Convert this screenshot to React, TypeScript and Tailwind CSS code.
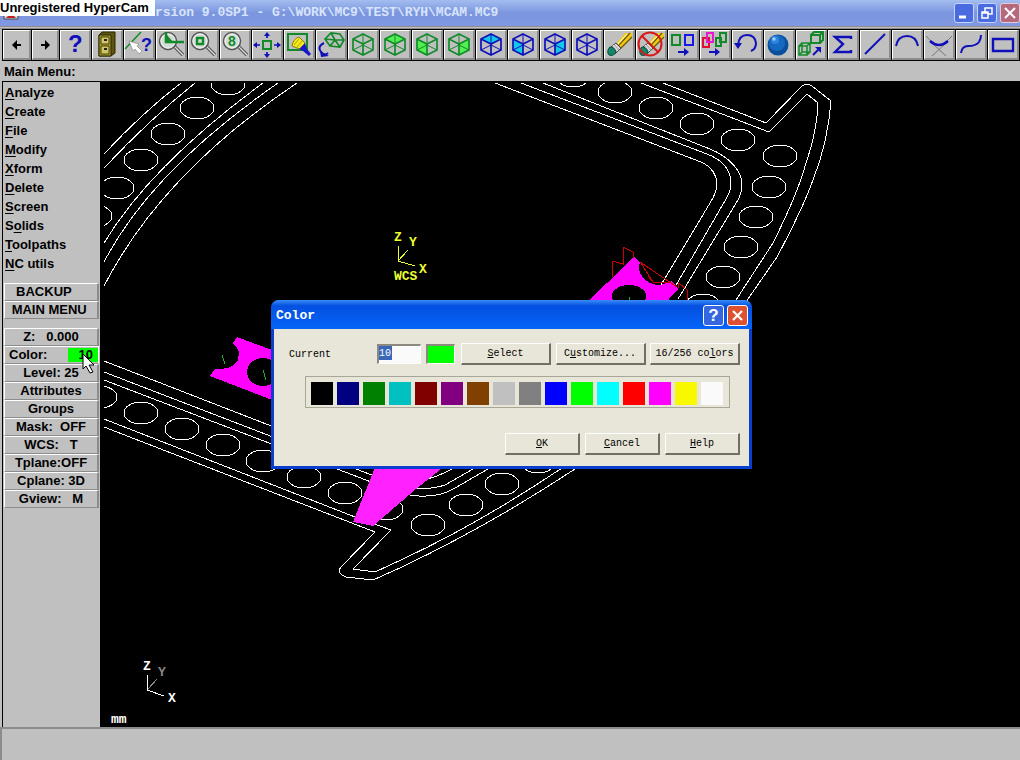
import type { ReactNode } from "react";

const GREEN = "#128a2a";
const BLUE = "#1010b8";

const Cube = ({ color, face, fill }: { color: string; face?: "top" | "left" | "right"; fill?: string }) => (
  <>
    {face === "top" && <path d="M14 3 24 8 14 13 4 8Z" fill={fill} />}
    {face === "left" && <path d="M4 8 14 13V24L4 19Z" fill={fill} />}
    {face === "right" && <path d="M24 8 14 13V24L24 19Z" fill={fill} />}
    <path d="M14 3V14L4 19M14 14 24 19" stroke={color} />
    <path d="M14 3 24 8V19L14 24 4 19V8ZM4 8 14 13 24 8M14 13V24" stroke={color} strokeWidth="1.7" />
  </>
);

const Magnifier = ({ children }: { children: ReactNode }) => (
  <>
    <path d="M17 15 26 24" stroke="#555" strokeWidth="3.5" />
    <path d="M17 15 26 24" stroke="#ddd" strokeWidth="1.2" />
    <circle cx="11" cy="10" r="8.5" fill="#d2ddd6" stroke="#555" strokeWidth="1.5" />
    <circle cx="11" cy="10" r="7" stroke="#f2f2f2" />
    {children}
  </>
);

const Pencil = () => (
  <>
    <path d="M11 13 20 2H27V7L15 18Z" fill="#f0c81c" />
    <path d="M13 15 25 2M15 18 27 6" stroke="#6b5300" strokeWidth="1.2" />
    <path d="M12 14 22 3" stroke="#fff08a" strokeWidth="1.2" />
    <path d="M6 16 11 12 16 17 11 22Z" fill="#b8b8b8" stroke="#444" />
    <path d="M8 14 13 20M10 13 15 18" stroke="#eee" />
    <path d="M3 19Q4 15 7 16 11 18 11 22 7 26 4 24 2 22 3 19Z" fill="#15856a" stroke="#0c4f40" />
  </>
);

const tools: { name: string; icon: ReactNode }[] = [
  {
    name: "Help",
    icon: (
      <text x="7" y="21" className="font-['Liberation_Sans'] text-[24px] font-bold" fill={BLUE}>
        ?
      </text>
    ),
  },
  {
    name: "File",
    icon: (
      <>
        <path d="M6 4 9 1H22V22L18 25H6Z" fill="#5c5410" stroke="#2a2600" />
        <path d="M6 4H18V25H6Z" fill="#a49a38" stroke="#2a2600" />
        <path d="M8 6H16V13H8ZM8 15H16V23H8Z" fill="#cfc66a" stroke="#4a4300" />
        <path d="M11 9H14M11 18H14" stroke="#222" strokeWidth="2" />
      </>
    ),
  },
  {
    name: "Analyze",
    icon: (
      <>
        <path d="M0 18 16 1" stroke={GREEN} strokeWidth="1.5" />
        <path d="M4 10 14 13 12 15 17 20 14 23 10 18 8 20Z" fill="#fff" stroke="#777" strokeWidth=".6" />
        <text x="16" y="20" className="font-['Liberation_Sans'] text-[18px] font-bold" fill={BLUE}>
          ?
        </text>
      </>
    ),
  },
  {
    name: "Zoom",
    icon: (
      <Magnifier>
        <path d="M9 1V11H27" stroke={GREEN} strokeWidth="2.5" />
        <path d="M10 11V4L16 11Z" fill={GREEN} />
      </Magnifier>
    ),
  },
  {
    name: "Zoom window",
    icon: (
      <Magnifier>
        <path d="M8 7H14V13H8Z" stroke={GREEN} strokeWidth="2.4" />
      </Magnifier>
    ),
  },
  {
    name: "Unzoom .8",
    icon: (
      <Magnifier>
        <text x="7" y="15" className="font-['Liberation_Sans'] text-[14px] font-bold" fill={GREEN}>
          8
        </text>
      </Magnifier>
    ),
  },
  {
    name: "Fit",
    icon: (
      <>
        <path d="M10 10H18V18H10Z" stroke={GREEN} strokeWidth="2" />
        <path d="M14 7V3M14 21V25M7 14H2M21 14H26" stroke={BLUE} strokeWidth="1.7" />
        <path d="M11 5 14 1 17 5ZM11 23 14 27 17 23ZM4 11 0 14 4 17ZM24 11 28 14 24 17Z" fill={BLUE} />
      </>
    ),
  },
  {
    name: "Repaint",
    icon: (
      <>
        <path d="M3 3H22V19H3Z" stroke={GREEN} strokeWidth="2" />
        <path d="M7 15Q8 8 14 6L20 12 17 19Z" fill="#f4ea20" stroke="#8a7d00" />
        <path d="M9 14 14 8M12 16 17 10" stroke="#b3a300" />
        <path d="M14 18 20 12 22 18 26 23 24 25 18 20Z" fill="#1818c8" />
      </>
    ),
  },
  {
    name: "Gview dynamic",
    icon: (
      <>
        <path
          d="M8 8 14 2 23 3 27 9 23 16 13 15ZM8 8 18 9 27 9M18 9 13 15M18 9 23 16M14 2 18 9"
          stroke={GREEN}
          strokeWidth="1.7"
        />
        <path d="M7 12Q-1 16 5 22 8 25 11 22" stroke={BLUE} strokeWidth="2" />
        <path d="M3 20 12 25 4 26Z" fill={BLUE} />
      </>
    ),
  },
  { name: "Gview isometric", icon: <Cube color={GREEN} /> },
  { name: "Gview top", icon: <Cube color={GREEN} face="top" fill="#50f050" /> },
  { name: "Gview front", icon: <Cube color={GREEN} face="left" fill="#50f050" /> },
  { name: "Gview side", icon: <Cube color={GREEN} face="right" fill="#50f050" /> },
  { name: "Cplane top", icon: <Cube color={BLUE} face="top" fill="#10c8e8" /> },
  { name: "Cplane front", icon: <Cube color={BLUE} face="left" fill="#10c8e8" /> },
  { name: "Cplane side", icon: <Cube color={BLUE} face="right" fill="#10c8e8" /> },
  { name: "Cplane 3D", icon: <Cube color={BLUE} /> },
  { name: "Delete", icon: <Pencil /> },
  {
    name: "Undelete",
    icon: (
      <>
        <Pencil />
        <circle cx="13" cy="13" r="11.5" stroke="#d81818" strokeWidth="2" />
        <path d="M5 5 21 21" stroke="#d81818" strokeWidth="2" />
      </>
    ),
  },
  {
    name: "Screen copy",
    icon: (
      <>
        <path d="M3 4H11V14H3Z" stroke={GREEN} strokeWidth="2" />
        <path d="M16 4H24V14H16Z" stroke="#1818e8" strokeWidth="2" />
        <path d="M9 21H17" stroke={BLUE} strokeWidth="2" />
        <path d="M15 17 20 21 15 25Z" fill={BLUE} />
      </>
    ),
  },
  {
    name: "Translate",
    icon: (
      <>
        <path d="M2 7H8V16H2Z" stroke="#e01030" strokeWidth="2" />
        <path d="M6 2H12V11H6Z" stroke="#e818d0" strokeWidth="2" />
        <path d="M15 7H20V15H15ZM19 2H25V11H19Z" stroke={GREEN} strokeWidth="2" />
        <path d="M8 21H16" stroke={BLUE} strokeWidth="2" />
        <path d="M14 17 19 21 14 25Z" fill={BLUE} />
      </>
    ),
  },
  {
    name: "Undo",
    icon: (
      <>
        <path d="M5 14Q6 4 14 4 22 4 23 12 23 18 18 20" stroke={BLUE} strokeWidth="2" />
        <path d="M1 12H9L5 18Z" fill={BLUE} />
      </>
    ),
  },
  {
    name: "Shade",
    icon: (
      <>
        <circle cx="13" cy="14" r="10.5" fill="#0a4f9c" />
        <circle cx="12" cy="12" r="8" fill="#1468c0" />
        <circle cx="10" cy="9" r="4" fill="#2c86dc" />
        <circle cx="9" cy="8" r="1.7" fill="#9fd0ff" />
      </>
    ),
  },
  {
    name: "Scale",
    icon: (
      <>
        <path d="M2 15H10V24H2ZM5 12H13V21H5ZM2 15 5 12M10 15 13 12M10 24 13 21M2 24 5 21" stroke={GREEN} strokeWidth="1.5" />
        <path d="M14 4H23V12H14ZM14 4 17 1H26V9L23 12M23 4 26 1" stroke={GREEN} strokeWidth="2" />
        <path d="M16 24 22 18" stroke={BLUE} strokeWidth="2" />
        <path d="M18 16H24V22Z" fill={BLUE} />
      </>
    ),
  },
  { name: "Sigma", icon: <path d="M22 8V6H6L14 13 6 21H22V19" stroke={BLUE} strokeWidth="2.4" /> },
  { name: "Line", icon: <path d="M4 23 24 3" stroke={BLUE} strokeWidth="2" /> },
  { name: "Arc", icon: <path d="M3 15Q5 5 14 5 23 5 25 15" stroke={BLUE} strokeWidth="2" /> },
  {
    name: "Fillet",
    icon: (
      <>
        <path d="M1 5 7 11M27 5 21 11M7 25 20 13M21 25 8 13" stroke="#777" />
        <path d="M5 10Q14 18 23 10" stroke={BLUE} strokeWidth="2.5" />
      </>
    ),
  },
  { name: "Spline", icon: <path d="M4 22Q5 15 11 15 19 15 22 11 24 8 24 4" stroke={BLUE} strokeWidth="2" /> },
  { name: "Rectangle", icon: <path d="M4 8H24V20H4Z" stroke={BLUE} strokeWidth="2.4" /> },
];

const menu = [
  ["", "A", "nalyze"],
  ["", "C", "reate"],
  ["", "F", "ile"],
  ["", "M", "odify"],
  ["", "X", "form"],
  ["", "D", "elete"],
  ["", "S", "creen"],
  ["S", "o", "lids"],
  ["", "T", "oolpaths"],
  ["", "N", "C utils"],
];

const settings = ["Level: 25", "Attributes", "Groups", "Mask:  OFF", "WCS:   T", "Tplane:OFF", "Cplane: 3D", "Gview:   M"];

const palette = [
  ["Black", "bg-black"],
  ["Navy", "bg-[#000080]"],
  ["Dark green", "bg-[#008000]"],
  ["Teal", "bg-[#00c0c0]"],
  ["Maroon", "bg-[#800000]"],
  ["Purple", "bg-[#800080]"],
  ["Brown", "bg-[#804000]"],
  ["Light gray", "bg-[#c0c0c0]"],
  ["Gray", "bg-[#808080]"],
  ["Blue", "bg-[#0000ff]"],
  ["Green", "bg-[#00ff00]"],
  ["Cyan", "bg-[#00ffff]"],
  ["Red", "bg-[#ff0000]"],
  ["Magenta", "bg-[#ff00ff]"],
  ["Yellow", "bg-[#f8f800]"],
  ["White", "bg-[#fafafa]"],
];

// centres of the bolt holes round the frame
const holes = [
  [228, 84], [197, 108], [168, 134], [141, 160], [117, 188], [95, 216],
  [573, 76], [615, 92], [656, 108], [697, 124], [738, 140], [780, 156], [769, 187],
  [756, 217], [741, 247], [723, 277], [703, 305],
  [100, 397], [141, 413], [182, 429], [223, 445], [263, 461], [304, 477], [345, 493],
  [386, 509], [428, 525], [466, 505], [502, 484], [538, 462],
];

const TitleBar = () => (
  <header className="flex h-[26px] items-center bg-linear-to-b from-[#a4bdf0] via-[#7b96de] to-[#8199e2]">
    <div className="relative h-full w-[155px] shrink-0">
      <svg className="absolute bottom-[6px] left-[3px] h-4 w-4" viewBox="0 0 16 16" aria-hidden="true">
        <path d="M1 1H15V15H1Z" fill="#d8d8d8" stroke="#444" />
        <path d="M3 14 8 9 13 14Z" fill="#c02020" />
      </svg>
      <div className="relative h-4 bg-white text-[13px] leading-4 font-bold whitespace-nowrap">
        Unregistered HyperCam
      </div>
    </div>
    <h1 className="grow font-['Liberation_Mono',monospace] text-[13px] font-bold whitespace-nowrap text-[#d8e4fc]">
      rsion 9.0SP1 - G:\WORK\MC9\TEST\RYH\MCAM.MC9
    </h1>
    <div className="flex gap-[3px]">
      <button aria-label="Minimize" className="h-5 w-5 rounded-[3px] border border-[#c6d4fa] bg-[#4a6ae0]">
        <svg viewBox="0 0 18 18">
          <path d="M4 13H11" stroke="#fff" strokeWidth="3" />
        </svg>
      </button>
      <button aria-label="Restore" className="h-5 w-5 rounded-[3px] border border-[#c6d4fa] bg-[#4a6ae0]">
        <svg viewBox="0 0 18 18" fill="none" stroke="#fff" strokeWidth="1.5">
          <path d="M4 8H10V14H4ZM7 8V4H14V10H10M4 9H10" />
        </svg>
      </button>
      <button aria-label="Close" className="h-5 w-5 rounded-[3px] border border-[#e6cbd6] bg-[#b5697c]">
        <svg viewBox="0 0 18 18">
          <path d="M4 4 14 14M14 4 4 14" stroke="#fff" strokeWidth="2" />
        </svg>
      </button>
    </div>
  </header>
);

const Toolbar = () => (
  <nav className="ml-[2px] flex gap-px overflow-hidden border-y border-l border-black bg-black">
    <button
      aria-label="Previous"
      className="h-[30px] w-7 shrink-0 border-t border-r-2 border-b-2 border-l border-t-white border-r-[#8c8c8c] border-b-[#8c8c8c] border-l-white bg-[#c0c0c0]"
    >
      <svg className="h-[27px] w-[25px]" viewBox="0 0 25 27">
        <path d="M10 14H17" stroke="#000" strokeWidth="2" />
        <path d="M8 14 13 9V19Z" />
      </svg>
    </button>
    <button
      aria-label="Next"
      className="h-[30px] w-[27px] shrink-0 border-t border-r-2 border-b-2 border-l border-t-white border-r-[#8c8c8c] border-b-[#8c8c8c] border-l-white bg-[#c0c0c0]"
    >
      <svg className="h-[27px] w-[24px]" viewBox="0 0 24 27">
        <path d="M8 14H15" stroke="#000" strokeWidth="2" />
        <path d="M17 14 12 9V19Z" />
      </svg>
    </button>
    {tools.map((tool) => (
      <button
        key={tool.name}
        aria-label={tool.name}
        className="h-[30px] w-[31px] shrink-0 border-t border-r-2 border-b-2 border-l border-t-white border-r-[#8c8c8c] border-b-[#8c8c8c] border-l-white bg-[#c0c0c0]"
      >
        <svg className="h-[27px] w-7 overflow-visible" viewBox="0 0 28 27" fill="none">
          {tool.icon}
        </svg>
      </button>
    ))}
  </nav>
);

const SideButton = ({ children }: { children: ReactNode }) => (
  <button className="block h-[18px] w-full border-t border-r-2 border-b border-l border-t-white border-r-[#8c8c8c] border-b-[#8c8c8c] border-l-white text-center text-[13px] leading-4 font-bold whitespace-pre">
    {children}
  </button>
);

const Sidebar = () => (
  <aside className="w-[98px] shrink-0 border-t border-l border-black bg-[#c0c0c0] px-px">
    <ul>
      {menu.map(([before, key, after]) => (
        <li key={key + after} className="h-[19px]">
          <button className="block pl-px text-[13px] leading-[21px] font-bold">
            {before}
            <span className="underline underline-offset-2">{key}</span>
            {after}
          </button>
        </li>
      ))}
    </ul>
    <div className="mt-[11px]">
      <SideButton>{"BACKUP    "}</SideButton>
      <SideButton>{"MAIN MENU "}</SideButton>
    </div>
    <div className="mt-[9px]">
      <SideButton>{"Z:   0.000"}</SideButton>
      <div className="relative">
        <button className="flex h-[18px] w-full items-center justify-between border-t border-r border-b border-l border-t-white border-r-white border-b-[#8c8c8c] border-l-white pl-1 text-[13px] leading-4 font-bold">
          <span>Color:</span>
          <span className="h-[14px] w-[30px] bg-[#00ff00] pr-[5px] text-right leading-[14px]">10</span>
        </button>
        <svg className="absolute top-[7px] left-[78px] h-[22px] w-4" viewBox="0 0 16 22" aria-hidden="true">
          <path d="M1 1V16L4 13 8 20 11 19 7 12H12Z" fill="#fff" stroke="#000" />
        </svg>
      </div>
      {settings.map((label) => (
        <SideButton key={label}>{label}</SideButton>
      ))}
    </div>
  </aside>
);

const Drawing = () => (
  <svg
    className="absolute inset-0 h-full w-full"
    viewBox="100 81 920 646"
    preserveAspectRatio="xMinYMin slice"
    fill="none"
    shapeRendering="crispEdges"
  >
    <clipPath id="view">
      <path d="M104 83H1020V727H104Z" />
    </clipPath>
    <g stroke="#fff" clipPath="url(#view)">
      {holes.map(([x, y]) => (
        <ellipse key={`${x}-${y}`} cx={x} cy={y} rx="17" ry="11" />
      ))}
      <path d="M181 83Q142 113 104 154M195 83Q149 120 104 168" />
      <path d="M263 83Q151 165 104 243M278 83Q151 171 104 262M297 83Q162 173 104 286" />
      <path d="M641 83 769 132 807 94 818 103Q817 132 806 163 798 193 773 243L736 300Q690 400 562 468 480 523 403 559L375 572 353 569 391 530 355 517 104 419" />
      <path d="M663 83 766 123 802 86Q807 82 812 86L831 101Q828 142 813 180 803 208 777 257L748 299Q700 400 575 469 490 525 402 567L373 580 346 577Q336 573 341 567L375 532 104 427" />
      <path d="M543 83 710 149C730 157 742 172 742 184 742 190 741 194 738 200L678 299" />
      <path d="M521 83 707 154C723 160 731 171 731 184 731 189 729 194 726 199L675 287" />
      <path d="M495 83 701 162C712 167 717 175 717 186Q716 192 713 198L661 285" />
      <path d="M104 361 400 476C415 482 428 482 452 469" />
      <path d="M104 372 395 484C415 490 430 490 445 485L473 469" />
      <path d="M104 380 400 493C420 498 440 497 455 488L488 469" />
    </g>

    <path d="M378 460H448L441 469 416 489 373 526 353 522Z" fill="#ff22ff" />
    <path d="M237 337 280 353V403L210 376 215 369H220C231 369 239 364 239 354 239 349 236 346 233 343Z" fill="#f0f" />
    <ellipse cx="263" cy="372" rx="16" ry="14" fill="#000" />
    <path d="M580 309 634 257 640 262C636 274 646 285 660 285L672 281 678 289 660 309Z" fill="#f0f" />
    <ellipse cx="629" cy="296" rx="17" ry="11" fill="#000" />
    <path d="M222 355 225 364M263 370 266 380M629 297V302" stroke="#20b030" />
    <path
      d="M612 277V261L623 264V247L633 252V258M640 262 677 287M641 263 653 282H670M653 282 648 276M678 288 679 283 687 290V300"
      stroke="#d00000"
    />

    <g className="font-['Liberation_Mono'] text-[13px] font-bold">
      <g fill="#ecff30" stroke="none">
        <text x="394" y="241">Z</text>
        <text x="409" y="246">Y</text>
        <text x="419" y="273">X</text>
        <text x="394" y="280">WCS</text>
      </g>
      <path d="M398 246V261L415 266M398 261 408 250" stroke="#ecff30" />
      <text x="143" y="670" fill="#fff">Z</text>
      <text x="158" y="676" fill="#888">Y</text>
      <text x="168" y="702" fill="#fff">X</text>
      <text x="111" y="723" fill="#fff">mm</text>
      <path d="M147 675V690L164 696" stroke="#fff" />
      <path d="M148 689 157 679" stroke="#888" />
    </g>
  </svg>
);

const DialogButton = ({ wide, children }: { wide?: boolean; children: ReactNode }) => (
  <button
    className={
      (wide ? "w-[90px] " : "w-[75px] ") +
      "h-[22px] border-t border-r-2 border-b-2 border-l border-t-white border-r-[#716f64] border-b-[#716f64] border-l-white leading-4"
    }
  >
    {children}
  </button>
);

const ColorDialog = () => (
  <section
    role="dialog"
    aria-label="Color"
    className="absolute top-[219px] left-[171px] w-[481px] rounded-t-lg border-x-[3px] border-b-[3px] border-[#0a3fd0] bg-[#0a3fd0] font-['Liberation_Mono',monospace] text-[10px]"
  >
    <div className="-mx-[3px] flex h-[29px] items-center gap-[3px] rounded-t-lg bg-linear-to-b from-[#3a8cf8] via-[#0550e0] via-20% to-[#0564f8] pt-[2px] pr-1 pl-[5px]">
      <h2 className="grow text-[13px] font-bold text-white">Color</h2>
      <button aria-label="Help" className="h-[21px] w-[21px] rounded-[3px] border border-white bg-[#3566e0]">
        <span className="block font-['Liberation_Sans'] text-[17px] leading-[19px] font-bold text-white">?</span>
      </button>
      <button aria-label="Close" className="h-[21px] w-[21px] rounded-[3px] border border-white bg-[#dd5030]">
        <svg viewBox="0 0 19 19">
          <path d="M5 5 14 14M14 5 5 14" stroke="#fff" strokeWidth="2.2" />
        </svg>
      </button>
    </div>
    <div className="bg-[#e8e6d8] px-[9px] pt-[14px] pb-[11px]">
      <div className="flex items-center gap-[5px] pl-[6px]">
        <label htmlFor="current" className="w-[83px]">
          Current
        </label>
        <div className="flex h-5 w-11 border border-t-2 border-l-2 border-t-[#8c8a80] border-r-white border-b-white border-l-[#8c8a80] bg-[#fafafa]">
          <input
            id="current"
            defaultValue="10"
            className="h-[14px] w-[13px] bg-[#3a68b8] text-white outline-none"
          />
        </div>
        <div className="h-5 w-[29px] border border-t-2 border-l-2 border-t-[#8c8a80] border-r-white border-b-white border-l-[#8c8a80] bg-[#00ff00]" />
        <div className="flex grow justify-between pl-px">
          <DialogButton wide>
            <u>S</u>elect
          </DialogButton>
          <DialogButton wide>
            C<u>u</u>stomize...
          </DialogButton>
          <DialogButton wide>
            16/256 co<u>l</u>ors
          </DialogButton>
        </div>
      </div>
      <div className="mt-[11px] mr-[10px] ml-[22px] flex h-8 gap-1 border border-[#a8a698] px-[5px] pt-[5px]">
        {palette.map(([name, color]) => (
          <button key={name} aria-label={name} className={"h-[23px] w-[22px] shrink-0 " + color} />
        ))}
      </div>
      <div className="mt-[25px] flex justify-end gap-[5px]">
        <DialogButton>
          <u>O</u>K
        </DialogButton>
        <DialogButton>
          <u>C</u>ancel
        </DialogButton>
        <DialogButton>
          <u>H</u>elp
        </DialogButton>
      </div>
    </div>
  </section>
);

export default function App() {
  return (
    <div className="flex min-h-screen flex-col overflow-hidden bg-[#c0c0c0] font-['Liberation_Sans',sans-serif] text-black">
      <TitleBar />
      <div className="h-[3px] border-y border-[#8c8c8c]" />
      <Toolbar />
      <p className="h-5 pt-px pl-1 text-[13px] leading-5 font-bold">Main Menu:</p>
      <div className="flex grow pl-[2px]">
        <Sidebar />
        <main className="relative grow overflow-hidden bg-black">
          <Drawing />
          <ColorDialog />
        </main>
      </div>
      <footer className="h-[33px] border-t-2 border-l-2 border-[#8c8c8c]" />
    </div>
  );
}
